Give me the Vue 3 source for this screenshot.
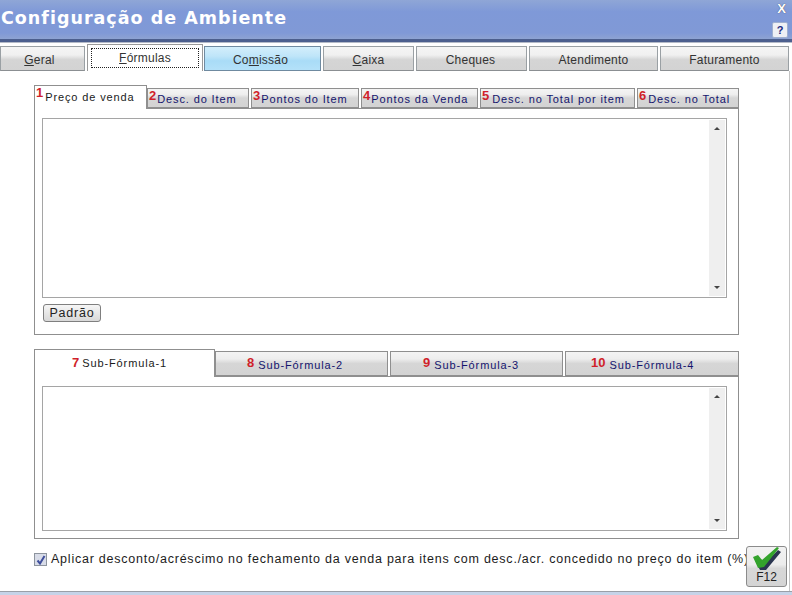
<script setup>
const mainTabs = [
  { pre: '', key: 'G', post: 'eral', w: 85, nudge: 6 },
  { pre: '', key: 'F', post: 'órmulas', w: 116, nudge: 3, active: true },
  { pre: 'Co', key: 'm', post: 'issão', w: 117, nudge: 4, hover: true },
  { pre: '', key: 'C', post: 'aixa', w: 91, nudge: 0 },
  { pre: 'Cheques', key: '', post: '', w: 111, nudge: 2 },
  { pre: 'Atendimento', key: '', post: '', w: 129, nudge: 0 },
  { pre: 'Faturamento', key: '', post: '', w: 129, nudge: 0 },
]
const formulaTabs = [
  { n: '1', label: 'Preço de venda', w: 113, gap: 1, active: true },
  { n: '2', label: 'Desc. do Item', w: 102, gap: 0 },
  { n: '3', label: 'Pontos do Item', w: 108, gap: 0 },
  { n: '4', label: 'Pontos da Venda', w: 117, gap: 0 },
  { n: '5', label: 'Desc. no Total por item', w: 155, gap: 2 },
  { n: '6', label: 'Desc. no Total', w: 102, gap: 1 },
]
const subTabs = [
  { n: '7', label: 'Sub-Fórmula-1', w: 181, pad: 37, active: true },
  { n: '8', label: 'Sub-Fórmula-2', w: 173, pad: 31 },
  { n: '9', label: 'Sub-Fórmula-3', w: 173, pad: 32 },
  { n: '10', label: 'Sub-Fórmula-4', w: 174, pad: 25 },
]
</script>

<template>
  <div class="window">
    <header class="titlebar">
      <h1 class="title">Configuração de Ambiente</h1>
      <div class="controls">
        <span class="close">X</span>
        <span class="help">?</span>
      </div>
    </header>

    <nav class="main-tabs">
      <div
        v-for="t in mainTabs"
        :key="t.w + t.pre + t.post"
        class="main-tab"
        :class="{ active: t.active, hover: t.hover }"
        :style="{ width: t.w + 'px', paddingRight: t.active ? '' : t.nudge + 'px' }"
      >
        <span class="main-label">{{ t.pre }}<u>{{ t.key }}</u>{{ t.post }}</span>
      </div>
    </nav>

    <main class="body">
      <section class="group first">
        <div class="tabs">
          <div
            v-for="t in formulaTabs"
            :key="t.n"
            class="tab compact"
            :class="{ active: t.active }"
            :style="{ width: t.w + 'px' }"
          >
            <b class="num">{{ t.n }}</b><span class="lbl" :style="{ paddingLeft: t.gap + 'px' }">{{ t.label }}</span>
          </div>
        </div>
        <div class="panel">
          <div class="editor tall">
            <div class="scroll"><i class="up"></i><i class="down"></i></div>
          </div>
          <button class="padrao" type="button">Padrão</button>
        </div>
      </section>

      <section class="group second">
        <div class="tabs">
          <div
            v-for="t in subTabs"
            :key="t.n"
            class="tab wide"
            :class="{ active: t.active }"
            :style="{ width: t.w + 'px', paddingLeft: t.pad + 'px' }"
          >
            <b class="num">{{ t.n }}</b><span class="lbl">{{ t.label }}</span>
          </div>
        </div>
        <div class="panel">
          <div class="editor short">
            <div class="scroll"><i class="up"></i><i class="down"></i></div>
          </div>
        </div>
      </section>

      <div class="footer">
        <span class="check">
          <svg width="10" height="10" viewBox="0 0 10 10"><path d="M1.5 5.5 L4 8.5 L8.5 1" fill="none" stroke="#3f4f9c" stroke-width="2"/></svg>
        </span>
        <span class="check-label">Aplicar desconto/acréscimo no fechamento da venda para itens com desc./acr. concedido no preço do item (%)</span>
        <button class="f12" type="button">
          <svg width="30" height="24" viewBox="0 0 30 24">
            <path d="M3 13 L9 12 L12 17 L26 3 L29 5 L14 23 L8 23 Z" fill="#2a3550"/>
            <path d="M1 10 L6 8 L10 13 L25 0 L27 1 L12 20 L6 21 Z" fill="#33a32c"/>
          </svg>
          <span>F12</span>
        </button>
      </div>
    </main>
    <div class="bottom"></div>
  </div>
</template>

<style>
html, body { margin: 0; background: #fff; }
</style>

<style scoped>
.window {
  width: 792px;
  height: 595px;
  display: flex;
  flex-direction: column;
  overflow: hidden;
  background: #fff;
  font-family: "Liberation Sans", Arial, sans-serif;
  font-size: 12px;
}
.titlebar {
  height: 39px;
  flex: none;
  display: flex;
  justify-content: space-between;
  background: linear-gradient(#8fa6d6 0, #7f99d8 30%, #8099d6 85%, #8ea3d2 100%);
  border-bottom: 3px solid #4c5f8e;
  box-shadow: 0 1px 0 #b4bac8;
}
.title {
  margin: 6px 0 0 1px;
  line-height: 24px;
  font-weight: 700;
  letter-spacing: 1px;
  color: #fff;
  font-family: "DejaVu Sans", sans-serif;
  font-size: 17.5px;
}
.controls {
  width: 22px;
  margin-right: 1px;
  display: flex;
  flex-direction: column;
  align-items: center;
}
.close {
  margin: 2px 0 0 3px;
  height: 14px;
  line-height: 14px;
  font-size: 13px;
  font-weight: 700;
  color: #fff;
  text-shadow: 0 0 1px #334;
}
.help {
  margin-top: 6px;
  width: 14px;
  height: 14px;
  border: 1px solid #9fb0d0;
  border-radius: 2px;
  background: #eef0f5;
  color: #1c2a80;
  font-weight: 700;
  font-size: 11px;
  line-height: 14px;
  text-align: center;
}
.main-tabs {
  flex: none;
  height: 29px;
  display: flex;
  align-items: flex-end;
  gap: 2px;
}
.main-tab {
  box-sizing: border-box;
  height: 25px;
  flex: none;
  display: flex;
  align-items: center;
  justify-content: center;
  padding-top: 2px;
  border: 1px solid #9aa0a4;
  border-bottom-color: #8b8f92;
  background: linear-gradient(#f5f5f5 0, #f0f0f0 35%, #d5d5d5 55%, #d3d3d3 100%);
  color: #333;
}
.main-label { font-size: 12px; letter-spacing: .22px; }
.main-tab.active {
  height: 27px;
  background: #fff;
  border-bottom: 0;
  border-color: #9a9a9a;
  padding: 3px;
  align-items: flex-start;
  margin-right: -1px;
}
.main-tab.active .main-label {
  flex: 1;
  border: 1px dotted #222;
  text-align: center;
  line-height: 18px;
  height: 18px;
}
.main-tab.hover {
  background: linear-gradient(#d3eefb 0, #bfe5f9 40%, #a9dcf7 60%, #b4e1f9 100%);
  border-color: #6f8aa0;
}
.body {
  flex: 1;
  width: 790px;
  box-sizing: border-box;
  position: relative;
  padding: 0 0 0 34px;
  border-right: 1px solid #c4c4c4;
  display: flex;
  flex-direction: column;
  min-height: 0;
}
.group { width: 705px; flex: none; display: flex; flex-direction: column; }
.first { margin-top: 14px; }
.second { margin-top: 14px; }
.tabs { display: flex; align-items: flex-end; height: 23px; position: relative; z-index: 1; }
.second .tabs { height: 27px; }
.tab {
  box-sizing: border-box;
  flex: none;
  height: 20px;
  display: flex;
  align-items: center;
  border: 1px solid #8f8f8f;
  background: linear-gradient(#f4f4f4 0, #eeeeee 30%, #d6d6d6 50%, #d3d3d3 100%);
  color: #14146e;
  font-size: 11px;
  letter-spacing: .88px;
  margin-right: 2px;
  white-space: nowrap;
}
.second .tab { height: 25px; }
.tab:nth-child(1) { margin-right: 0; }
.tab:last-child { margin-right: 0; }
.tab.active {
  height: 24px;
  background: #fff;
  color: #1a1a1a;
  border-bottom: 0;
  margin-bottom: -1px;
  z-index: 2;
}
.second .tab.active {
  height: 28px;
  align-items: flex-start;
  padding-top: 6px;
}
.num {
  color: #d01f2a;
  font-family: "Liberation Sans", sans-serif;
  font-size: 13px;
  font-weight: 700;
  letter-spacing: 0;
  margin-right: 1px;
  align-self: flex-start;
  line-height: 13px;
}
.compact .num { margin-left: 1px; }
.wide .num { align-self: center; margin-right: 4px; margin-top: -2px; }
.wide.active .num { align-self: flex-start; margin-right: 3px; margin-top: 0; }
.wide .lbl { padding-top: 2px; }
.wide.active .lbl { padding-top: 1px; line-height: 13px; }
.compact:not(.active) .lbl { padding-top: 2px; }
.compact.active .lbl { margin-top: -1px; }
.panel {
  box-sizing: border-box;
  border: 1px solid #8f8f8f;
  padding: 9px 11px 0 7px;
}
.first .panel { height: 227px; }
.second .panel { height: 163px; }
.editor {
  box-sizing: border-box;
  border: 1px solid #a5a5a5;
  display: flex;
  justify-content: flex-end;
  padding: 1px;
}
.tall { height: 180px; }
.short { height: 145px; }
.scroll {
  width: 16px;
  background: #efefef;
  position: relative;
}
.scroll i {
  position: absolute;
  left: 5px;
  width: 0;
  height: 0;
  border-left: 3px solid transparent;
  border-right: 3px solid transparent;
}
.up { top: 7px; border-bottom: 3px solid #444; }
.down { bottom: 7px; border-top: 3px solid #444; }
.padrao {
  display: block;
  box-sizing: border-box;
  margin: 6px 0 0 1px;
  width: 58px;
  height: 18px;
  padding: 0;
  border: 1px solid #7f7f7f;
  border-radius: 3px;
  background: linear-gradient(#f6f6f6, #d8d8d8);
  font-family: "Liberation Sans", Arial, sans-serif;
  font-size: 12.5px;
  letter-spacing: .8px;
  color: #222;
  line-height: 15px;
}
.footer {
  position: relative;
  flex: none;
  height: 49px;
  display: flex;
  align-items: flex-start;
  padding-top: 13px;
  box-sizing: border-box;
}
.check {
  box-sizing: border-box;
  width: 13px;
  height: 13px;
  margin-top: 1px;
  border: 1px solid #8d949e;
  background: #d8dce8;
  display: flex;
  align-items: center;
  justify-content: center;
}
.check-label {
  margin: -1px 0 0 4px;
  white-space: nowrap;
  font-size: 12.5px;
  letter-spacing: .77px;
  color: #1c1c1c;
  line-height: 16px;
}
.f12 {
  position: absolute;
  left: 712px;
  top: 7px;
  box-sizing: border-box;
  width: 41px;
  height: 41px;
  padding: 0;
  border: 1px solid #8b8b8b;
  border-radius: 3px;
  background: linear-gradient(#f2f2f2 0, #ececec 45%, #d8d8d8 55%, #d4d4d4 100%);
  display: flex;
  flex-direction: column;
  align-items: center;
  font-family: "Liberation Sans", Arial, sans-serif;
  font-size: 12px;
  color: #222;
  line-height: 13px;
}
.bottom {
  flex: none;
  height: 4px;
  box-sizing: border-box;
  border-top: 1px solid #9a9fa8;
  background: #c6d3e8;
}
</style>
